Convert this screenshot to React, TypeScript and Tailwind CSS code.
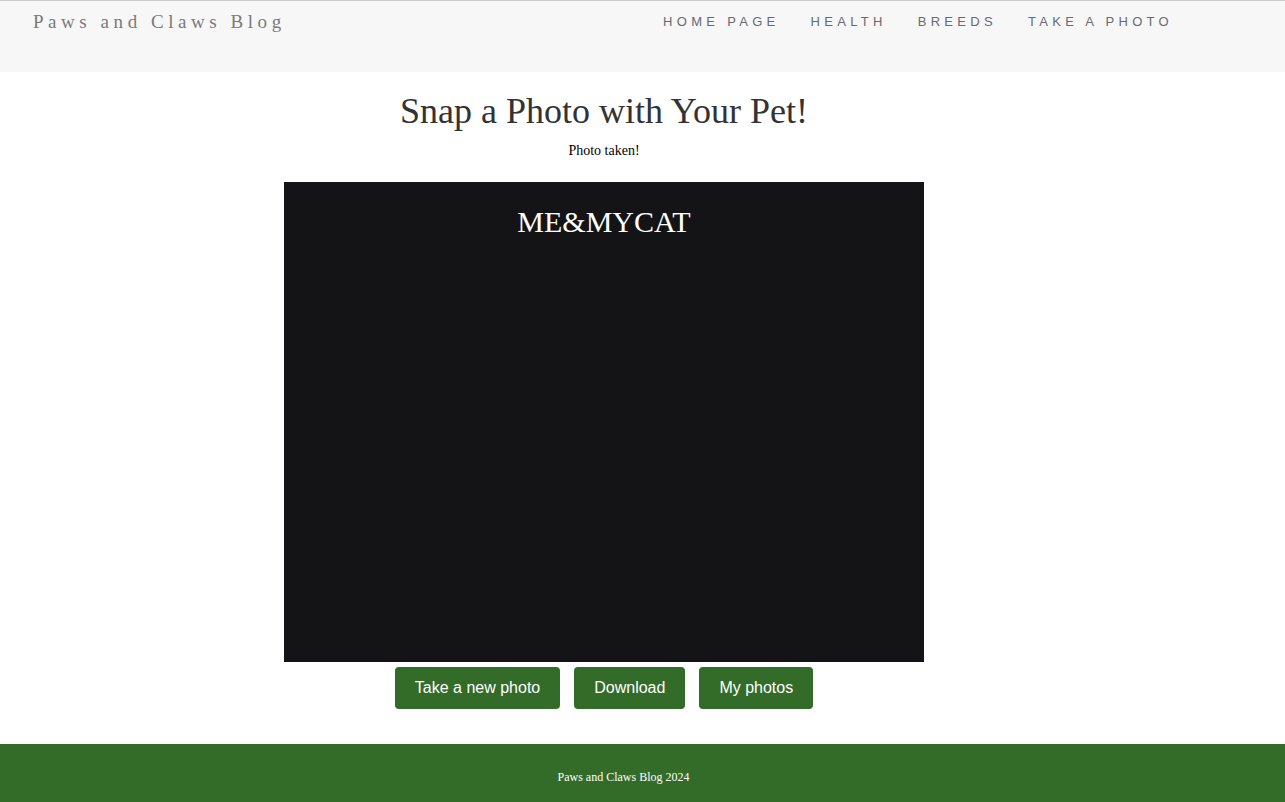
import React from "react";

export default function App() {
  const serif = { fontFamily: '"Liberation Serif", "Times New Roman", serif' } as const;
  const sans = { fontFamily: '"Liberation Sans", Arial, sans-serif' } as const;
  return (
    <div className="min-h-[802px] flex flex-col bg-white" style={serif}>
      <header className="h-[72px] bg-[#f7f7f7] border-t border-[#cccccc] flex items-start justify-between pl-[33px] pr-[112px]">
        <div className="mt-[10px] text-[19px] leading-[22px] tracking-[4.55px] text-[#7a7a7a]" style={serif}>
          Paws and Claws Blog
        </div>
        <nav className="flex gap-[31px] mt-[13px] text-[13px] leading-[16px] tracking-[4.3px] text-[#666b73]" style={sans}>
          <span>HOME PAGE</span>
          <span>HEALTH</span>
          <span>BREEDS</span>
          <span>TAKE A PHOTO</span>
        </nav>
      </header>
      <main className="flex-1 flex flex-col items-center pr-[77px]">
        <h1 className="mt-[18px] text-[36px] leading-[42px] text-[#333333]" style={serif}>
          Snap a Photo with Your Pet!
        </h1>
        <p className="mt-[11px] text-[14px] leading-[16px] text-black">Photo taken!</p>
        <div className="mt-[23px] w-[640px] h-[480px] bg-[#141416] flex justify-center">
          <span className="mt-[22px] text-[30px] leading-[36px] text-white" style={serif}>ME&amp;MYCAT</span>
        </div>
        <div className="mt-[5px] flex gap-[14px]" style={sans}>
          <button className="h-[42px] px-[20px] rounded-[4px] bg-[#336b29] text-white text-[16px]">Take a new photo</button>
          <button className="h-[42px] px-[20px] rounded-[4px] bg-[#336b29] text-white text-[16px]">Download</button>
          <button className="h-[42px] px-[20px] rounded-[4px] bg-[#336b29] text-white text-[16px]">My photos</button>
        </div>
      </main>
      <footer className="mt-[35px] h-[58px] bg-[#336b29] flex items-center justify-center pr-[38px] pt-[8px]">
        <span className="text-[12px] text-white" style={serif}>Paws and Claws Blog 2024</span>
      </footer>
    </div>
  );
}
